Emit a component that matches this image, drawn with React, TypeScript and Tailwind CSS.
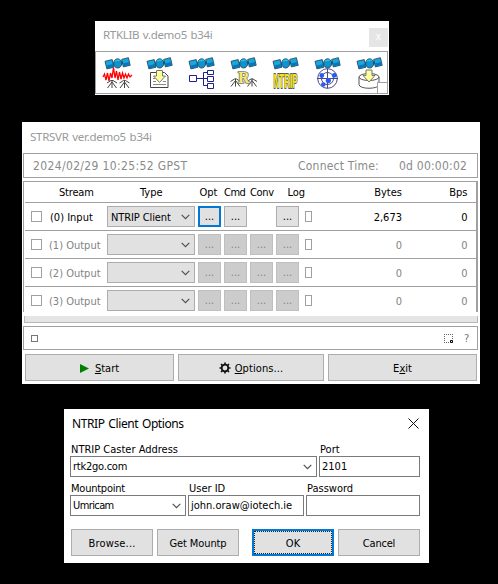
import type { ReactNode } from "react";

const ui = "font-['DejaVu_Sans_Condensed','DejaVu_Sans',sans-serif]";
const caption = "font-['Noto_Sans',sans-serif]";

function Satellite() {
  return (
    <g stroke="#2c4a5a" strokeWidth=".9">
      <path d="M11 8L22 6.500" stroke="#222" strokeWidth="2.500" />
      <path d="M4 5.300L11.200 3.600L13 11.200L5.900 12.900Z" fill="#16a8e2" />
      <path d="M5.500 9.600L12.200 8L12.700 10.900L6.200 12.400Z" fill="#0678ba" stroke="none" />
      <path d="M20.700 3.400L27.400 1.700L29.200 9.300L22.300 10.900Z" fill="#16a8e2" />
      <path d="M21.700 7.600L28.300 6L28.900 8.900L22.600 10.500Z" fill="#0678ba" stroke="none" />
      <ellipse cx="16.700" cy="7.400" rx="4" ry="4.600" fill="#0c94d0" />
      <path d="M14.200 4.800L18.700 4" stroke="#24c4f2" strokeWidth="1.500" />
    </g>
  );
}

function Tripod({ x, y = 24 }: { x: number; y?: number }) {
  return (
    <path
      d={`M${x - 5} ${y + 3}L${x - 1} ${y + 0.5}H${x + 1}L${x + 5} ${y + 3}M${x} ${y}V${y + 8}M${x} ${y + 2}L${x - 4.5} ${y + 8}M${x} ${y + 2}L${x + 4.5} ${y + 8}`}
      fill="none"
      stroke="#444"
      strokeWidth="1"
    />
  );
}

function DownArrow({ x, y }: { x: number; y: number }) {
  return (
    <path
      d={`M${x - 3} ${y}h6v5.5h3L${x} ${y + 12}L${x - 6} ${y + 5.5}h3z`}
      fill="#ffff9c"
      stroke="#777"
    />
  );
}

function AppIcon({ children }: { children: ReactNode }) {
  return (
    <svg width="42" height="36" viewBox="0 0 42 36" className="shrink-0">
      <Satellite />
      {children}
    </svg>
  );
}

function Launcher() {
  return (
    <section className="ml-[95px] h-[74px] w-[294px] bg-white">
      <div className="flex h-[30px] justify-between pl-[8px] pr-[1px] pt-[7px]">
        <span className={`${caption} text-[11.500px] leading-[14px] tracking-[-0.320px] text-[#999] [word-spacing:1px]`}>RTKLIB v.demo5 b34i</span>
        <span className={`${ui} h-[19px] w-[19px] bg-[#e5e5e5] text-center text-[10px] leading-[17px] text-white`}>x</span>
      </div>
      <div className="relative flex h-[43px] w-[293px] border border-[#a0a0a0] pl-[5px] pt-[4px]">
        <AppIcon>
          <Tripod x={11} />
          <Tripod x={23.5} />
          <path d="M2 21L3.500 18L5 24L6.500 17L8 25L9.500 17L11 22L12.500 11.500L14 22L15.500 15L17 24L18.500 16L20 23L21.500 17L23 22L24.500 18L26 22L27.500 18L29 21L31 19" fill="none" stroke="#ff0000" strokeWidth="1.300" />
        </AppIcon>
        <AppIcon>
          <path d="M7.500 16.500h14l3.500 3.500v11.500h-17.500z" fill="#fff" stroke="#444" />
          <path d="M10 25.500h3M20 25.500h3M10 28.500h13M10 22.500h2" stroke="#888" />
          <DownArrow x={16.5} y={14.5} />
        </AppIcon>
        <AppIcon>
          <path d="M12 22.500h10M18.500 22.500v-6h4M18.500 22.500v7h4M4.500 19.500h7v6h-7zM22.500 14.500h6v4h-6zM22.500 20.500h6v5h-6zM22.500 27.500h6v5h-6z" fill="none" stroke="#20208c" />
        </AppIcon>
        <AppIcon>
          <Tripod x={8.5} y={22.5} />
          <Tripod x={25} y={22.5} />
          <text x="11" y="27" fontSize="16" fontWeight="700" fill="#f4e870" stroke="#777" strokeWidth="1.600" paintOrder="stroke" className="font-['Liberation_Serif',serif]">R</text>
        </AppIcon>
        <AppIcon>
          <text x="4.500" y="20.300" transform="scale(1 1.560)" fontSize="13" fontWeight="700" textLength="24" lengthAdjust="spacingAndGlyphs" fill="#f4e610" stroke="#555" strokeWidth="1.200" paintOrder="stroke" className="font-['Liberation_Sans',sans-serif]">NTRIP</text>
        </AppIcon>
        <AppIcon>
          <g fill="none" stroke="#4a4a88">
            <circle cx="16.500" cy="22.500" r="9.800" />
            <circle cx="16.500" cy="22.500" r="6" />
            <path d="M6 22.500h21M16.500 12.500v20" />
          </g>
          <g fill="#2a5af0">
            <circle cx="10.800" cy="19.500" r="2.400" />
            <circle cx="23.300" cy="19.300" r="2.400" />
            <circle cx="17.300" cy="24.500" r="2.600" />
            <circle cx="12.300" cy="28.500" r="2.300" />
          </g>
        </AppIcon>
        <AppIcon>
          <path d="M6 21v7.500c0 5 20 5 20 0v-7.500" fill="#fff" stroke="#555" />
          <ellipse cx="16" cy="21" rx="10" ry="3.500" fill="#fff" stroke="#555" />
          <DownArrow x={16} y={14} />
        </AppIcon>
        <span className="absolute bottom-0 right-0 h-[11px] w-[10px] border-l border-t border-[#a0a0a0] bg-white" />
      </div>
    </section>
  );
}

function Chevron() {
  return (
    <svg width="9" height="6" viewBox="0 0 9 6" className="shrink-0">
      <path d="M.7 .8L4.500 4.600L8.300 .8" fill="none" stroke="#505050" strokeWidth="1.200" />
    </svg>
  );
}

function DotsButton({ state }: { state: "focus" | "on" | "off" | "none" }) {
  const base = "h-[21px] w-[23px] shrink-0 text-center ";
  if (state === "none") return <span className={base} />;
  if (state === "focus") return <button className={base + "border-2 border-[#0078d7] bg-[#e1e1e1] leading-[16px]"}>...</button>;
  if (state === "on") return <button className={base + "border border-[#adadad] bg-[#e1e1e1] leading-[18px]"}>...</button>;
  return <button className={base + "border border-[#bfbfbf] bg-[#cccccc] leading-[18px] text-[#838383]"}>...</button>;
}

type Row = { label: string; type: string; bytes: string; bps: string; active: boolean };
const rows: Row[] = [
  { label: "(0) Input", type: "NTRIP Client", bytes: "2,673", bps: "0", active: true },
  { label: "(1) Output", type: "", bytes: "0", bps: "0", active: false },
  { label: "(2) Output", type: "", bytes: "0", bps: "0", active: false },
  { label: "(3) Output", type: "", bytes: "0", bps: "0", active: false },
];

function StreamRow({ row }: { row: Row }) {
  return (
    <div className={`ml-[1px] flex h-[28px] w-[451px] border-t border-[#a0a0a0] pl-[6px] pt-[3px] ${row.active ? "text-black" : "text-[#838383]"}`}>
      <span className="mt-[5px] h-[11px] w-[11px] shrink-0 border border-[#a0a0a0]" />
      <span className={`w-[65px] shrink-0 leading-[23px] ${row.active ? "pl-[8px]" : "pl-[7px]"}`}>{row.label}</span>
      <div className="flex h-[21px] w-[88px] shrink-0 items-center justify-between border border-[#adadad] bg-[#e1e1e1] pl-[3px] pr-[4px]">
        <span className="pt-[2px] leading-[17px] tracking-[-0.1px]">{row.type}</span>
        <Chevron />
      </div>
      <div className="ml-[3px] flex shrink-0 gap-[3px]">
        <DotsButton state={row.active ? "focus" : "off"} />
        <DotsButton state={row.active ? "on" : "off"} />
        <DotsButton state={row.active ? "none" : "off"} />
        <DotsButton state={row.active ? "on" : "off"} />
      </div>
      <span className="ml-[6px] mt-[5px] h-[11px] w-[7px] shrink-0 border border-[#a0a0a0]" />
      <span className="w-[90px] shrink-0 text-right leading-[23px]">{row.bytes}</span>
      <span className="w-[65.500px] shrink-0 text-right leading-[23px]">{row.bps}</span>
    </div>
  );
}

function Push({ className, children }: { className: string; children: ReactNode }) {
  return (
    <button className={`flex h-[27px] shrink-0 items-center justify-center border border-[#adadad] bg-[#e1e1e1] pt-[3px] ${className}`}>
      {children}
    </button>
  );
}

function Gear() {
  return (
    <svg width="12" height="12" viewBox="0 0 12 12" className="mb-[3px]">
      <circle cx="6" cy="6" r="3.300" fill="none" stroke="#111" strokeWidth="1.800" />
      <path d="M6 .5v2.500M6 9v2.500M.5 6h2.500M9 6h2.500M2 2l1.600 1.600M8.400 8.400l1.600 1.600M10 2l-1.600 1.600M3.600 8.400l-1.600 1.600" stroke="#111" strokeWidth="1.600" />
    </svg>
  );
}

function StreamServer() {
  return (
    <section className={`${ui} ml-[22px] mt-[27px] h-[262px] w-[458px] bg-white pl-[1px] text-[11px]`}>
      <div className={`${caption} h-[31px] pl-[7px] pt-[7px] text-[11.500px] leading-[16px] tracking-[-0.280px] text-[#999] [word-spacing:1px]`}>STRSVR ver.demo5 b34i</div>
      <div className="flex h-[25px] w-[455px] border border-[#a0a0a0] pl-[9px] text-[12px] leading-[24px] text-[#8a8a8a]">
        <span className="w-[265px] tracking-[0.360px]">2024/02/29 10:25:52 GPST</span>
        <span className="w-[101px] tracking-[0.220px]">Connect Time:</span>
        <span className="tracking-[0.220px]">0d 00:00:02</span>
      </div>
      <div className="mt-[3px] h-[131px] w-[455px] border-l border-r-2 border-t border-[#a0a0a0]">
        <div className="flex h-[20px] leading-[21px]">
          <span className="w-[80px] pl-[35px] tracking-[-0.2px]">Stream</span>
          <span className="w-[84px] pl-[36px]">Type</span>
          <span className="w-[24px] pl-[11.500px]">Opt</span>
          <span className="w-[27px] pl-[12px] tracking-[-0.500px]">Cmd</span>
          <span className="w-[37px] pl-[11px] tracking-[-0.300px]">Conv</span>
          <span className="w-[30px] pl-[11.500px]">Log</span>
          <span className="w-[96px] text-right">Bytes</span>
          <span className="w-[65.500px] text-right">Bps</span>
        </div>
        {rows.map((r) => (
          <StreamRow key={r.label} row={r} />
        ))}
      </div>
      <div className="ml-[1px] mt-[4px] h-[7px] w-[454px] border-x border-b border-[#b8b8b8] bg-[#e5e5e5]" />
      <div className="mt-[3px] flex h-[24px] w-[455px] items-center border border-[#a0a0a0] pl-[7px] pr-[7px]">
        <span className="h-[7px] w-[7px] border border-[#777]" />
        <svg width="9" height="9" viewBox="0 0 9 9" className="ml-auto">
          <path d="M0 .5h9M.5 0v9M8.500 0v6M0 8.500h6" fill="none" stroke="#666" strokeDasharray="1 1" />
          <path d="M6.500 6.500h2v2h-2z" fill="#fff" stroke="#000" />
        </svg>
        <span className="ml-[11px] w-[6px] pt-[2px] text-[11px] text-[#777]">?</span>
      </div>
      <div className="ml-[2px] mt-[4px] flex">
        <Push className="w-[149px] gap-[6px]">
          <svg width="9" height="9" viewBox="0 0 9 9" className="mb-[2px]"><path d="M0 0L9 4.500L0 9Z" fill="#008000" /></svg>
          <span><u>S</u>tart</span>
        </Push>
        <Push className="ml-[4px] w-[146px] gap-[4px]">
          <Gear />
          <span className="tracking-[0.1px]"><u>O</u>ptions...</span>
        </Push>
        <Push className="ml-[4px] w-[149px]">
          <span>E<u>x</u>it</span>
        </Push>
      </div>
    </section>
  );
}

function Field({ label, value, className, combo, tracking = "" }: { label: string; value: string; className: string; combo?: boolean; tracking?: string }) {
  return (
    <div className={className}>
      <div className="h-[16px] pl-[1px] leading-[20px]">{label}</div>
      <div className="flex h-[21px] items-center justify-between border border-[#7a7a7a] pl-[2px] pr-[4px]">
        <span className={`${tracking} leading-[19px]`}>{value}</span>
        {combo && <Chevron />}
      </div>
    </div>
  );
}

function ClientOptions() {
  return (
    <section className={`${ui} ml-[64px] mt-[25px] h-[154px] w-[365px] bg-white pl-[6px] pt-[7px] text-[11px]`}>
      <div className="flex h-[26px] justify-between pl-[2px] pr-[10px]">
        <span className={`${caption} text-[12px] leading-[16px] tracking-[-0.400px] [word-spacing:1px]`}>NTRIP Client Options</span>
        <svg width="11" height="11" viewBox="0 0 11 11" className="mt-[2px]"><path d="M.5 .5L10.500 10.500M10.500 .5L.5 10.500" stroke="#111" /></svg>
      </div>
      <div className="mt-[-2px] flex gap-[2px]">
        <Field label="NTRIP Caster Address" value="rtk2go.com" combo className="w-[247px]" tracking="tracking-[-0.230px]" />
        <Field label="Port" value="2101" className="w-[101px]" />
      </div>
      <div className="mt-[2px] flex gap-[2px]">
        <Field label="Mountpoint" value="Umricam" combo className="w-[116px] tracking-[-0.230px]" tracking="tracking-[-0.6px]" />
        <Field label="User ID" value="john.oraw@iotech.ie" className="w-[116px]" />
        <Field label="Password" value="" className="w-[114px]" />
      </div>
      <div className="ml-[1px] mt-[13px] flex">
        <Push className="w-[82px]"><span className="tracking-[0.180px]">Browse...</span></Push>
        <Push className="ml-[4px] w-[82px]"><span className="tracking-[-0.1px]">Get Mountp</span></Push>
        <button className="ml-[13px] h-[27px] w-[82px] border-2 border-[#0078d7] bg-[#e1e1e1]">
          <span className="flex h-full items-center justify-center border border-dotted border-[#222] pt-[3px]">OK</span>
        </button>
        <Push className="ml-[4px] w-[82px]"><span className="tracking-[-0.2px]">Cancel</span></Push>
      </div>
    </section>
  );
}

export default function App() {
  return (
    <main className="h-[584px] w-[498px] overflow-hidden bg-black pt-[21px] text-black">
      <Launcher />
      <StreamServer />
      <ClientOptions />
    </main>
  );
}
